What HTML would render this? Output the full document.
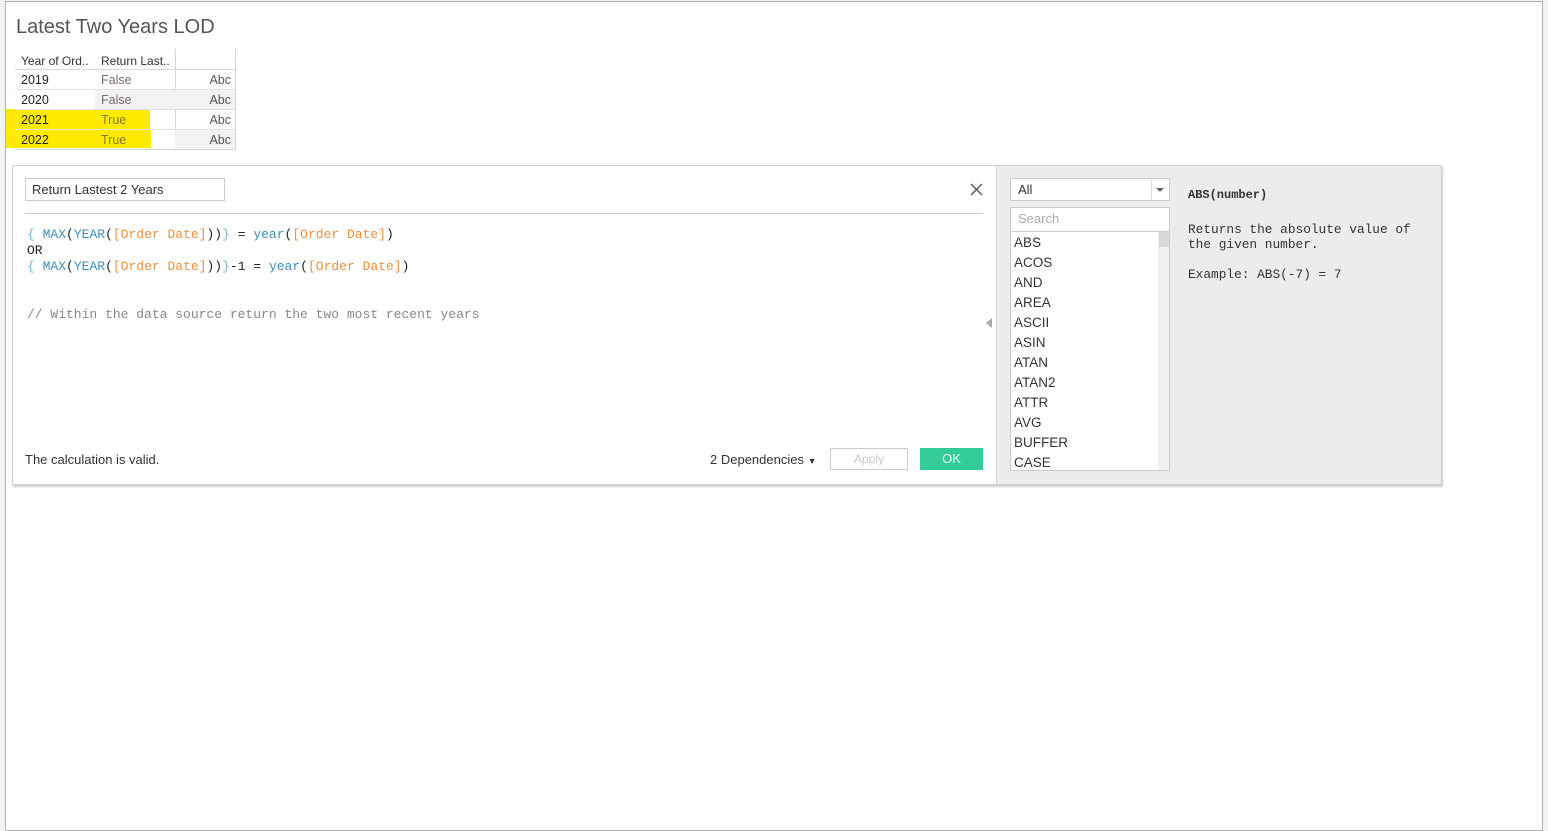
<!DOCTYPE html>
<html><head><style>
*{margin:0;padding:0;box-sizing:border-box}
body{width:1548px;height:821px;background:#f3f3f3;position:relative;overflow:hidden;font-family:"Liberation Sans",sans-serif;color:#333}
.a{position:absolute}
.mono{font-family:"Liberation Mono",monospace}
.frame{left:5px;top:1px;width:1538px;height:830px;background:#fff;border:1px solid #b0b0b0}
.hl{background:#ffea00}
</style></head><body>
<div class="a frame"></div>
<div class="a" style="left:16px;top:16px;font-size:20px;color:#555">Latest Two Years LOD</div>
<div class="a" style="left:175px;top:49px;width:1px;height:101px;background:#d4d4d4"></div>
<div class="a" style="left:235px;top:49px;width:1px;height:101px;background:#d4d4d4"></div>
<div class="a" style="left:21px;top:54px;font-size:12px;color:#333">Year of Ord..</div>
<div class="a" style="left:101px;top:54px;font-size:12px;color:#333">Return Last..</div>
<div class="a" style="left:15px;top:69px;width:221px;height:1px;background:#d8d8d8"></div>
<div class="a" style="left:95px;top:90px;width:80px;height:20px;background:#f2f2f2"></div>
<div class="a" style="left:175px;top:130px;width:60px;height:20px;background:#f2f2f2"></div>
<div class="a" style="left:175px;top:90px;width:60px;height:20px;background:#f2f2f2"></div>
<div class="a hl" style="left:6px;top:109px;width:144px;height:21px"></div>
<div class="a hl" style="left:6px;top:129px;width:145px;height:19px"></div>
<div class="a" style="left:15px;top:89px;width:221px;height:1px;background:#e2e2e2"></div>
<div class="a" style="left:15px;top:109px;width:221px;height:1px;background:#e2e2e2"></div>
<div class="a" style="left:15px;top:129px;width:221px;height:1px;background:#e2e2e2"></div>
<div class="a" style="left:15px;top:149px;width:221px;height:1px;background:#d4d4d4"></div>
<div class="a" style="left:21px;top:70px;font-size:12.5px;line-height:20px;color:#222">2019<br>2020<br>2021<br>2022</div>
<div class="a" style="left:101px;top:70px;font-size:12.5px;line-height:20px;color:#7a6a6a">False<br>False<br><span style="color:#8a7a30">True</span><br><span style="color:#8a7a30">True</span></div>
<div class="a" style="left:205px;top:70px;font-size:12.5px;line-height:20px;color:#555;text-align:right;width:26px">Abc<br>Abc<br>Abc<br>Abc</div>
<div class="a" style="left:12px;top:165px;width:1430px;height:320px;background:#fff;border:1px solid #d0d0d0;box-shadow:1px 2px 2px rgba(0,0,0,.2)"></div>
<div class="a" style="left:996px;top:166px;width:445px;height:318px;background:#ececec;border-left:1px solid #d6d6d6"></div>
<div class="a" style="left:25px;top:178px;width:200px;height:23px;border:1px solid #ccc;font-size:13px;padding:3px 6px;color:#333">Return Lastest 2 Years</div>
<svg class="a" style="left:970px;top:183px" width="13" height="13"><path d="M1 1L12 12M12 1L1 12" stroke="#555" stroke-width="1.4"/></svg>
<div class="a" style="left:25px;top:213px;width:958px;height:1px;background:#ccc"></div>
<div class="a mono" style="left:27px;top:227px;font-size:13px;line-height:16px;white-space:pre;color:#222"><span style="color:#7bb3cf">{</span> <span style="color:#3b8fb5">MAX</span>(<span style="color:#3b8fb5">YEAR</span>(<span style="color:#f28e3c">[Order Date]</span>))<span style="color:#7bb3cf">}</span> = <span style="color:#3b8fb5">year</span>(<span style="color:#f28e3c">[Order Date]</span>)
OR
<span style="color:#7bb3cf">{</span> <span style="color:#3b8fb5">MAX</span>(<span style="color:#3b8fb5">YEAR</span>(<span style="color:#f28e3c">[Order Date]</span>))<span style="color:#7bb3cf">}</span>-1 = <span style="color:#3b8fb5">year</span>(<span style="color:#f28e3c">[Order Date]</span>)


<span style="color:#888">// Within the data source return the two most recent years</span></div>
<div class="a" style="left:986px;top:318px;width:0;height:0;border-top:5px solid transparent;border-bottom:5px solid transparent;border-right:6px solid #aaa"></div>
<div class="a" style="left:25px;top:452px;font-size:13px;color:#333">The calculation is valid.</div>
<div class="a" style="left:710px;top:452px;font-size:13px;color:#333">2 Dependencies <span style="font-size:9px">▼</span></div>
<div class="a" style="left:830px;top:448px;width:78px;height:22px;border:1px solid #ccc;font-size:12px;color:#ccc;text-align:center;line-height:20px">Apply</div>
<div class="a" style="left:920px;top:448px;width:63px;height:22px;background:#32cc97;font-size:13px;color:#eafff5;text-align:center;line-height:22px">OK</div>
<div class="a" style="left:1010px;top:178px;width:160px;height:23px;border:1px solid #ccc;background:#fff;font-size:13px;padding:3px 7px;color:#333">All</div>
<div class="a" style="left:1151px;top:179px;width:1px;height:21px;background:#ddd"></div>
<div class="a" style="left:1156px;top:188px;border-left:4px solid transparent;border-right:4px solid transparent;border-top:4px solid #666"></div>
<div class="a" style="left:1010px;top:207px;width:160px;height:264px;border:1px solid #ccc;background:#fff"></div>
<div class="a" style="left:1011px;top:231px;width:158px;height:1px;background:#ccc"></div>
<div class="a" style="left:1018px;top:211px;font-size:13px;color:#aaa">Search</div>
<div class="a" style="left:1158px;top:232px;width:11px;height:238px;background:#f1f1f1"></div>
<div class="a" style="left:1159px;top:232px;width:10px;height:15px;background:#d8d8d8"></div>
<div class="a" style="left:1014px;top:233px;font-size:13.5px;line-height:20px;color:#333">ABS<br>ACOS<br>AND<br>AREA<br>ASCII<br>ASIN<br>ATAN<br>ATAN2<br>ATTR<br>AVG<br>BUFFER<br>CASE</div>
<div class="a mono" style="left:1188px;top:188px;font-size:12px;font-weight:bold;color:#333">ABS(number)</div>
<div class="a mono" style="left:1188px;top:222px;font-size:12.8px;line-height:15px;color:#333;white-space:pre">Returns the absolute value of
the given number.

Example: ABS(-7) = 7</div>
</body></html>
